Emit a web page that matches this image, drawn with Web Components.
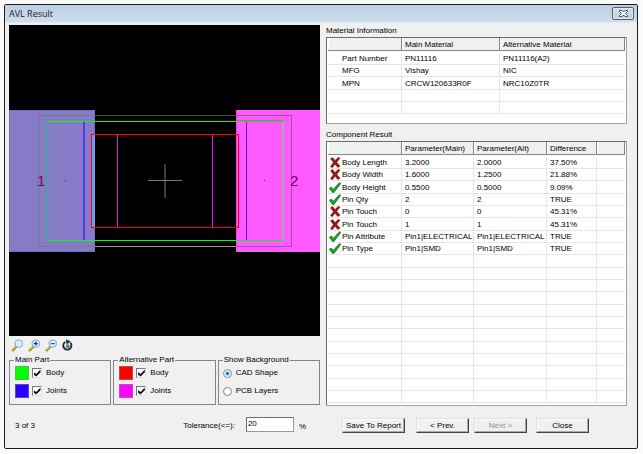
<!DOCTYPE html>
<html lang="en">
<head>
<meta charset="utf-8">
<title>AVL Result</title>
<style>
html { height: 100%; background: #fafafa; }
body { margin: 0; min-height: 100%; box-sizing: border-box; padding: 4px 5px 5px 4px; display: grid; font: 8px/12px "Liberation Sans", Arial, sans-serif; color: #000; }
.views { display: flex; flex-direction: column; min-width: 0; }
.groups { display: grid; grid-template-columns: 1fr 1fr 1fr; gap: 2px; margin-top: 2px; }
.data { display: flex; flex-direction: column; min-width: 0; }
.foot { display: flex; height: 15px; margin-top: 12px; align-items: center; }
.status { padding: 3px 0 0 6px; }
.tolerance { margin-left: auto; margin-right: 14px; }
.actions { padding-left: 16px; }
.prev { margin-left: 11px; }
.next { margin-left: 5px; }
.close { margin-left: 9px; }
</style>
</head>
<body>
<dialog-window caption="AVL Result">
  <div class="views" slot="left">
    <part-canvas></part-canvas>
    <view-tools></view-tools>
    <div class="groups">
      <group-box label="Main Part">
        <layer-toggle color="#00ff00">Body</layer-toggle>
        <layer-toggle color="#2a00ff">Joints</layer-toggle>
      </group-box>
      <group-box label="Alternative Part">
        <layer-toggle color="#ff0000">Body</layer-toggle>
        <layer-toggle color="#ff00ff">Joints</layer-toggle>
      </group-box>
      <group-box label="Show Background">
        <background-choice></background-choice>
      </group-box>
    </div>
    <div class="foot">
      <span class="status">3 of 3</span>
      <tolerance-field class="tolerance"></tolerance-field>
    </div>
  </div>
  <div class="data" slot="right">
    <result-table id="material" label="Material Information"></result-table>
    <result-table id="component" label="Component Result"></result-table>
    <div class="foot actions">
      <push-button style="--w:63px">Save To Report</push-button>
      <push-button class="prev">&lt; Prev.</push-button>
      <push-button class="next" disabled>Next &gt;</push-button>
      <push-button class="close">Close</push-button>
    </div>
  </div>
</dialog-window>

<script>
const define = (name, render) => customElements.define(name, class extends HTMLElement {
  connectedCallback() {
    if (this.shadowRoot) return;
    this.attachShadow({ mode: "open" }).innerHTML = render(this);
  }
});

define("dialog-window", el => `
<style>
:host { display: flex; flex-direction: column; border: 1px solid #1c1c1c; border-radius: 2px; background: #f0f0f0; overflow: hidden; }
header { display: flex; align-items: center; height: 17px; padding: 0 3px 0 4px; background: linear-gradient(#bccddd, #cddeed); border-bottom: 1px solid #e2e9f0; }
h1 { flex: 1; margin: 0; font: 9px/14px "Open Sans", "Noto Sans", sans-serif; color: #16212c; }
button { width: 22px; height: 13px; padding: 0; border: 1px solid #53606e; border-radius: 2px; background: linear-gradient(#d5e1ec, #bccddd); box-shadow: inset 0 0 0 1px #dfe9f2; display: grid; place-items: center; }
main { flex: 1; display: grid; grid-template-columns: minmax(0, 311fr) minmax(0, 301fr); gap: 6px; padding: 2px 10px 0 4px; }
</style>
<header><h1>${el.getAttribute("caption")}</h1>
<button aria-label="Close window"><svg width="9" height="7" viewBox="0 0 9 7"><path d="M.5.5H3L4.500 2L6 .5H8.500V1.500L6.500 3.500L8.500 5.500V6.500H6L4.500 5L3 6.500H.5V5.500L2.500 3.500L.5 1.500Z" fill="#fff" stroke="#3f4752" stroke-width=".9"/></svg></button></header>
<main><slot name="left"></slot><slot name="right"></slot></main>`);

define("part-canvas", () => `
<style>
:host { display: block; background: #000; }
svg { display: block; width: 100%; height: auto; }
text { font: 15px "Liberation Sans", Arial, sans-serif; }
</style>
<svg viewBox="0 0 311 311" shape-rendering="crispEdges" role="img" aria-label="Component overlay">
<rect width="311" height="311" fill="#000"/>
<rect y="85" width="86" height="142" fill="#766bc0"/>
<rect x="1" y="86" width="84" height="140" fill="#857bc7"/>
<rect x="227" y="85" width="84" height="142" fill="#ff5aff"/>
<rect x="227" y="85" width="1" height="142" fill="#e94be9"/>
<rect x="86" y="90" width="141" height="1" fill="#505050"/>
<rect x="86" y="221" width="141" height="1" fill="#999"/>
<path d="M29 90H86V91H30V221H86V222H29Z" fill="#77788a"/>
<path d="M227 90H283V222H227V221H282V91H227Z" fill="#a153a1"/>
<rect x="38" y="95" width="48" height="1" fill="#9a6fd8"/>
<rect x="227" y="95" width="47" height="1" fill="#d052d0"/>
<rect x="74" y="97" width="2" height="118" fill="#5636df"/>
<rect x="237" y="97" width="1" height="118" fill="#6500ff"/>
<rect x="38" y="97" width="1" height="118" fill="#20c66e"/>
<rect x="273" y="97" width="2" height="118" fill="#a0b5a0"/>
<rect x="38" y="96" width="236" height="1" fill="#00ff00"/>
<rect x="38" y="215" width="236" height="1" fill="#00ff00"/>
<rect x="108" y="110" width="1" height="92" fill="#e516e5"/>
<rect x="203" y="110" width="1" height="92" fill="#e516e5"/>
<rect x="83" y="110" width="3" height="92" fill="#6f9eff"/>
<rect x="82" y="109" width="148" height="1" fill="#f00"/>
<rect x="82" y="202" width="148" height="1" fill="#f00"/>
<rect x="82" y="109" width="1" height="94" fill="#f00"/>
<rect x="229" y="109" width="1" height="94" fill="#f00"/>
<rect x="155" y="139" width="2" height="34" fill="#3c3c3c"/>
<rect x="139" y="155" width="34" height="1" fill="#777"/>
<rect x="56" y="155" width="1" height="1" fill="#2a00ff"/>
<rect x="255" y="155" width="1" height="1" fill="#8b00c8"/>
<text x="28" y="161" fill="#800060">1</text><text x="281" y="161" fill="#70006c">2</text>
</svg>`);

const lens = inner => `<svg width="13" height="13" viewBox="0 0 13 13"><path d="M1 12L5.500 7.500" stroke="#8a6516" stroke-width="2.200"/><path d="M1 11.500L5 7.500" stroke="#f0b43a" stroke-width="1.200"/><circle cx="7.800" cy="4.600" r="3.800" fill="#d4f1fc" stroke="#7ba7dc" stroke-width="1"/>${inner}</svg>`;
define("view-tools", () => `
<style>
:host { display: flex; gap: 4px; padding: 3px 0 0 2px; height: 14px; }
button { width: 13px; height: 13px; padding: 0; border: 0; background: none; }
button:last-child { margin-left: -1px; }
svg { display: block; }
</style>
<button aria-label="Zoom window">${lens("")}</button>
<button aria-label="Zoom in">${lens('<path d="M5.800 4.600h4M7.800 2.600v4" stroke="#1a2fa0" stroke-width="1.200"/>')}</button>
<button aria-label="Zoom out">${lens('<path d="M5.800 4.600h4" stroke="#3a4fb0" stroke-width="1.200"/>')}</button>
<button aria-label="Refresh"><svg width="13" height="13" viewBox="0 0 13 13"><path d="M4.300 3A4.100 4.100 0 1 0 9.300 3.700" fill="none" stroke="#20204a" stroke-width="1.800"/><path d="M5 .3L9.600 2.500L5.600 5.400Z" fill="#20204a"/><circle cx="6.800" cy="7.200" r="1.900" fill="#36a336"/></svg></button>`);

define("group-box", el => `
<style>
:host { display: block; min-width: 0; }
fieldset { margin: 0; min-width: 0; height: 50px; box-sizing: border-box; border: 1px solid #858585; padding: 0 5px; }
legend { padding: 0 1px; margin-left: -1px; line-height: 10px; white-space: nowrap; }
.body { display: grid; gap: 4px; margin-top: 1px; }
</style>
<fieldset><legend>${el.getAttribute("label")}</legend><div class="body"><slot></slot></div></fieldset>`);

define("layer-toggle", el => `
<style>
:host { display: block; }
label { display: flex; align-items: center; height: 14px; }
i { width: 14px; height: 14px; background: ${el.getAttribute("color")}; box-shadow: inset 0 0 0 1px #8888; margin-right: 3px; }
input { appearance: none; width: 10px; height: 10px; margin: 0 4px 0 0; background: #fff; border: 1px solid; border-color: #777 #ddd #ddd #777; display: grid; place-items: center; }
input:checked::before { content: ""; width: 7px; height: 7px; background: #111; clip-path: polygon(0 35%, 38% 65%, 100% 0, 100% 38%, 38% 100%, 0 70%); }
</style>
<label><i></i><input type="checkbox" checked><slot></slot></label>`);

define("background-choice", () => `
<style>
:host { display: grid; gap: 4px; }
label { display: flex; align-items: center; height: 14px; }
input { appearance: none; box-sizing: border-box; width: 9px; height: 9px; margin: 0 4px 0 -1px; border: 1px solid #858585; border-radius: 50%; background: #fff; }
input:checked { background: radial-gradient(circle, #1680dc 0 1px, #a5d4f5 2px, #fff 3px); }
</style>
<label><input type="radio" name="bg" checked>CAD Shape</label>
<label><input type="radio" name="bg">PCB Layers</label>`);

define("tolerance-field", () => `
<style>
:host { display: flex; align-items: center; }
label { padding-top: 3px; }
input { box-sizing: border-box; width: 48px; height: 15px; margin: 0 5px 0 11px; padding: 0 0 2px 1px; border: 1px solid; border-color: #6d6d6d #999 #999 #6d6d6d; background: #fff; font: inherit; line-height: 10px; outline: 0; }
.unit { padding-top: 5px; }
</style>
<label for="t">Tolerance(&lt;=):</label><input id="t" value="20"><span class="unit">%</span>`);

define("push-button", el => `
<style>
:host { display: block; width: var(--w, 53px); }
button { box-sizing: border-box; width: 100%; height: 15px; padding: 0; border: 1px solid; border-color: #e0e0e0 #444 #444 #e0e0e0; box-shadow: inset -1px -1px #aaa, inset 1px 1px #fff; background: #f0f0f0; font: inherit; line-height: 12px; color: #000; white-space: nowrap; }
button:disabled { color: #8d8d8d; }
</style>
<button ${el.hasAttribute("disabled") ? "disabled" : ""}><slot></slot></button>`);

const marks = {
  no: `<svg width="12" height="11" viewBox="0 0 12 11" role="img" aria-label="Mismatch"><path d="M1.500 1.800L3.600 0.500L6 3.600L9.300 0.300L11 1.200L7.700 5.200L11 9.200L8.800 10.500L6 7.300L3.300 10.700L1.500 9.600L4.500 5.500Z" fill="#a31212" stroke="#6d0808" stroke-width=".5"/></svg>`,
  yes: `<svg width="12" height="11" viewBox="0 0 12 11" role="img" aria-label="Match"><path d="M0.300 6.300L2.300 5L4.400 7.200L10.500 0.600L11.800 1.500L4.900 10.600L3.600 10.600Z" fill="#12a81c" stroke="#174c1c" stroke-width=".6"/></svg>`
};
const tables = {
  material: {
    cols: ["74px", "98px", ""],
    head: ["", "Main Material", "Alternative Material"],
    rows: [["", "Part Number", "PN11116", "PN11116(A2)"], ["", "MFG", "Vishay", "NIC"], ["", "MPN", "CRCW120633R0F", "NRC10Z0TR"]],
    count: 5
  },
  component: {
    cols: ["74px", "72px", "73px", "50px", ""],
    head: ["", "Parameter(Main)", "Parameter(Alt)", "Difference", ""],
    rows: [
      ["no", "Body Length", "3.2000", "2.0000", "37.50%", ""],
      ["no", "Body Width", "1.6000", "1.2500", "21.88%", ""],
      ["yes", "Body Height", "0.5500", "0.5000", "9.09%", ""],
      ["yes", "Pin Qty", "2", "2", "TRUE", ""],
      ["no", "Pin Touch", "0", "0", "45.31%", ""],
      ["no", "Pin Touch", "1", "1", "45.31%", ""],
      ["yes", "Pin Attribute", "Pin1|ELECTRICAL", "Pin1|ELECTRICAL", "TRUE", ""],
      ["yes", "Pin Type", "Pin1|SMD", "Pin1|SMD", "TRUE", ""]
    ],
    count: 20
  }
};
define("result-table", el => {
  const t = tables[el.id];
  const blank = t.head.map(() => "<td></td>").join("");
  let body = "";
  for (let i = 0; i < t.count; i++) {
    const r = t.rows[i];
    body += "<tr>" + (r ? `<th scope="row"><div><span>${marks[r[0]] || ""}</span>${r[1]}</div></th>` + r.slice(2).map(c => `<td>${c}</td>`).join("") : blank) + "</tr>";
  }
  return `
<style>
:host { display: block; }
.frame { box-sizing: border-box; background: #fff; border: 1px solid #a5a5a5; border-left-color: #6d6d6d; border-top-color: #6d6d6d; padding: 0 1px 2px 1px; }
:host(#material) .frame { padding-bottom: 9px; }
:host(#component) { margin-top: 5px; }
h2 { margin: 0; font: inherit; line-height: 12px; }
table { width: 100%; border-collapse: separate; border-spacing: 0; table-layout: fixed; }
th, td { box-sizing: border-box; height: 12px; padding: 0 0 0 3px; text-align: left; font-weight: normal; line-height: 11px; white-space: nowrap; border: 0 solid #e6e6e6; border-width: 0 1px 1px 0; }
tbody tr:nth-child(3n) > * { height: 13px; }
td:last-child { border-right: 0; }
thead th { height: 13px; background: #f0f0f0; border-color: #858585; box-shadow: inset 1px 0 #fff; }
thead::after { content: ""; display: table-row; height: 2px; }
tbody th { padding: 0; }
th div { display: flex; align-items: center; height: 11px; }
span { width: 12px; margin: 0 1px; height: 11px; }
svg { display: block; }
</style>
<h2>${el.getAttribute("label")}</h2>
<div class="frame"><table aria-label="${el.getAttribute("label")}"><colgroup>${t.cols.map(w => `<col style="width:${w || "auto"}">`).join("")}</colgroup>
<thead><tr>${t.head.map(h => `<th scope="col">${h}</th>`).join("")}</tr></thead><tbody>${body}</tbody></table></div>`;
});
</script>
</body>
</html>
